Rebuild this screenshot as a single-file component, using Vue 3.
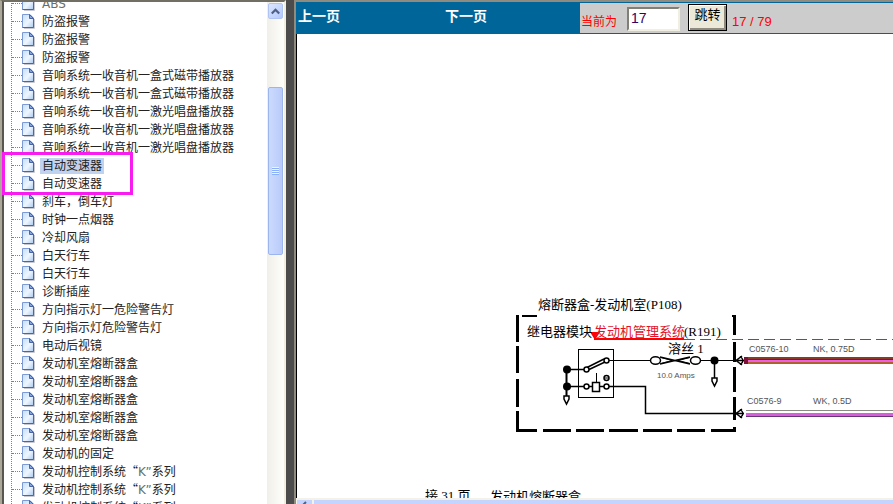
<script setup>
import { ref } from 'vue'

const items = [
  'ABS',
  '防盗报警',
  '防盗报警',
  '防盗报警',
  '音响系统一收音机一盒式磁带播放器',
  '音响系统一收音机一盒式磁带播放器',
  '音响系统一收音机一激光唱盘播放器',
  '音响系统一收音机一激光唱盘播放器',
  '音响系统一收音机一激光唱盘播放器',
  '自动变速器',
  '自动变速器',
  '刹车，倒车灯',
  '时钟一点烟器',
  '冷却风扇',
  '白天行车',
  '白天行车',
  '诊断插座',
  '方向指示灯一危险警告灯',
  '方向指示灯危险警告灯',
  '电动后视镜',
  '发动机室熔断器盒',
  '发动机室熔断器盒',
  '发动机室熔断器盒',
  '发动机室熔断器盒',
  '发动机室熔断器盒',
  '发动机的固定',
  '发动机控制系统“K”系列',
  '发动机控制系统“K”系列',
  '发动机控制系统“K”系列',
]
const selected = ref(9)
const page = ref('17')
const current = ref(17)
const total = 79

function jump() {
  const n = parseInt(page.value, 10)
  if (n >= 1 && n <= total) current.value = n
}

// Splits a title so that Latin runs can take their own face.
function parts(title) {
  return title.split(/([A-Z]+”?)/).filter(Boolean)
}
</script>

<template>
  <div class="viewer" lang="zh-CN">
    <aside class="side">
      <div class="tree-view">
        <ul class="tree">
          <li v-for="(title, i) in items" :key="i" class="node">
            <svg class="page-icon" width="13" height="15" viewBox="0 0 13 15" aria-hidden="true">
              <defs>
                <linearGradient id="sheet" x1="0" y1="0" x2="1" y2="1">
                  <stop offset="0" stop-color="#c4def8" />
                  <stop offset="0.55" stop-color="#eef6ff" />
                  <stop offset="1" stop-color="#a9c9f0" />
                </linearGradient>
              </defs>
              <path d="M2 14.5H12.5V5" fill="none" stroke="#c9c9d4" />
              <path d="M.5.5H8L11.5 4V13.5H.5Z" fill="url(#sheet)" stroke="#7c9ad6" />
              <path d="M11.5 4V13.5H.5" fill="none" stroke="#5b5f9d" />
              <path d="M7.5.5V4.5H11.5Z" fill="#83a6dc" stroke="#4a64a6" />
            </svg>
            <a
              href="#"
              class="title"
              :class="{ selected: i === selected }"
              @click.prevent="selected = i"
            ><span v-for="(p, k) in parts(title)" :key="k" :class="{ latin: /[A-Z]/.test(p) }">{{ p }}</span></a>
          </li>
        </ul>
      </div>
      <div class="vbar">
        <button type="button" class="bar-button" aria-label="向上滚动">
          <svg width="9" height="7" viewBox="0 0 9 7" aria-hidden="true">
            <path d="M.8 5.5L4.5 1.8L8.2 5.5" fill="none" stroke="#4d6185" stroke-width="2.2" />
          </svg>
        </button>
        <div class="vthumb"><span class="grip"></span></div>
      </div>
      <div class="mark"></div>
    </aside>

    <div class="splitter"></div>

    <main class="content">
      <form class="toolbar" @submit.prevent="jump">
        <a href="#" class="nav">上一页</a>
        <a href="#" class="nav">下一页</a>
        <div class="pager">
          <label for="page" class="caption">当前为</label>
          <input id="page" v-model="page" type="text" class="page-input" />
          <button type="submit" class="jump">跳转</button>
          <span class="count">{{ current }} / {{ total }}</span>
        </div>
      </form>

      <div class="sheet">
        <svg class="diagram" width="100%" height="100%">
          <g transform="translate(-297 -34)">
            <!-- fuse box outline -->
            <g stroke="#000" stroke-width="3" fill="none">
              <path d="M517.5 315V342M517.5 346V373M517.5 379V407M517.5 411V432" />
              <path d="M516 430.5H537M543 430.5H571M576 430.5H604M609 430.5H638M643 430.5H672M677 430.5H705M711 430.5H736" />
              <path d="M734.5 316V335M734.5 342V362M734.5 367V392M734.5 397V420M734.5 427V432" />
              <path d="M522 316H537M732 316H736" stroke-width="2" />
            </g>

            <!-- relay -->
            <g stroke="#000" fill="none">
              <rect x="578.5" y="349.5" width="35" height="48" />
              <path d="M567 369.5H584M567 386.5H584M588 386.5H592M600 386.5H604" stroke-width="1.5" />
              <path d="M566.5 369V398" stroke-width="2" />
              <path d="M564 396H569V399L566.5 404L564 399Z" fill="#fff" stroke-width="1.5" />
              <path d="M587 367.5L604 359M588 370L605 362" stroke-width="1.5" />
              <rect x="592.5" y="382.5" width="7" height="9" stroke-width="1.5" />
              <path d="M596.5 373V382" />
              <g fill="#fff" stroke-width="1.5">
                <circle cx="586.5" cy="369.5" r="2.5" />
                <circle cx="606.5" cy="360.5" r="2.5" />
                <circle cx="606.5" cy="378" r="2.5" />
                <circle cx="586.5" cy="386.5" r="2.5" />
                <circle cx="606.5" cy="386.5" r="2.5" />
              </g>
              <path d="M604 378H609" />
            </g>
            <g fill="#000">
              <circle cx="567" cy="369.5" r="4" />
              <circle cx="567" cy="386.5" r="4" />
              <circle cx="714.5" cy="360.5" r="4" />
            </g>

            <!-- fuse and leads -->
            <g stroke="#000" fill="none">
              <path d="M609 360.5H651M700 360.5H738" />
              <path d="M609 386.5H645.5V413.5H738" stroke-width="1.5" />
              <path d="M660 357L690 364M660 364L690 357" stroke-width="1.5" />
              <path d="M661 357.5L672 360.5L661 363.5M690 357.5L678 360.5L690 363.5" />
              <ellipse cx="655.5" cy="360.5" rx="5" ry="3.8" fill="#fff" stroke-width="1.5" />
              <ellipse cx="695.5" cy="360.5" rx="5" ry="3.8" fill="#fff" stroke-width="1.5" />
              <path d="M714.5 364V379" stroke-width="1.5" />
              <path d="M712 378H717V381L714.5 386L712 381Z" fill="#fff" stroke-width="1.5" />
            </g>

            <!-- outgoing wires -->
            <path d="M744 358H3000" stroke="#8a3b24" stroke-width="2" />
            <path d="M744 359.5H3000" stroke="#701848" stroke-width="1" />
            <path d="M744 361H3000" stroke="#ee5fe6" stroke-width="2" />
            <path d="M744 363H3000" stroke="#b0602c" stroke-width="2" />
            <path d="M746 410.5H3000" stroke="#8b8b83" />
            <path d="M746 414.5H3000" stroke="#d45fd8" stroke-width="3" />
            <path d="M746 416.5H3000" stroke="#693477" />
            <g stroke="#000" fill="none" stroke-width="1.5">
              <path d="M742 356L736 360.5L742 365M736 360.5H744" />
              <path d="M740 356.5Q746 360.5 740 364.5" />
              <path d="M742 409L736 413.5L742 418M736 413.5H744" />
              <path d="M740 409.5Q746 413.5 740 417.5" />
            </g>
            <path d="M744 357H748V364H744Z" fill="#7c1238" />

            <!-- system boundary -->
            <path d="M594 339H684" stroke="#f00" stroke-width="2" />
            <path d="M684 339.5H3000" stroke="#b02c60" stroke-dasharray="11 5" />
            <path d="M590 332H600L595 340Z" fill="#f00" />

            <g class="drawing-text">
              <text x="538" y="309">熔断器盒-发动机室(P108)</text>
              <text x="527" y="336">继电器模块</text>
              <text x="594" y="336" class="system">发动机管理系统</text>
              <text x="684" y="336">(R191)</text>
              <text x="668" y="353">溶丝 1</text>
              <text x="425" y="500">接 31 页</text>
              <text x="490" y="501">发动机熔断器盒</text>
            </g>
            <g class="wire-text">
              <text x="749" y="352">C0576-10</text>
              <text x="813" y="352">NK, 0.75D</text>
              <text x="747" y="404">C0576-9</text>
              <text x="813" y="404">WK, 0.5D</text>
              <text x="657" y="378" class="amps">10.0 Amps</text>
            </g>
          </g>
        </svg>
      </div>
      <div class="hbar">
        <button type="button" class="hbutton" aria-label="向左滚动">
          <svg width="5" height="8" viewBox="0 0 5 8" aria-hidden="true">
            <path d="M4 1L1 4L4 7" fill="none" stroke="#4d6185" stroke-width="2" />
          </svg>
        </button>
        <div class="hthumb"></div>
      </div>
    </main>
  </div>
</template>

<style>
body {
  overflow: hidden;
}
</style>

<style scoped>
.viewer {
  display: flex;
  height: 100vh;
  overflow: hidden;
  font-family: "Liberation Sans", "Noto Sans CJK SC", sans-serif;
  font-size: 12px;
  background: #fff;
}
.side {
  position: relative;
  box-sizing: border-box;
  display: flex;
  flex: 0 0 286px;
  border-left: 4px ridge #aca899;
  border-right: 2px solid #f1efe2;
  border-top: 2px solid #716f64;
}
.tree-view {
  flex: 1;
  overflow: hidden;
}
.tree {
  margin: -8px 0 0 7px;
  padding: 0;
  list-style: none;
  border-left: 1px dotted #808080;
}
.node {
  display: flex;
  align-items: center;
  height: 18px;
}
.node::before {
  content: "";
  width: 10px;
  border-top: 1px dotted #808080;
}
.page-icon {
  flex: none;
}
.title {
  align-self: flex-end;
  box-sizing: border-box;
  height: 16px;
  margin-left: 5px;
  padding: 0 2px;
  line-height: 13px;
  color: #222;
  font-family: "Noto Sans CJK SC", sans-serif;
  text-decoration: none;
  white-space: nowrap;
}
.latin {
  font-family: "DejaVu Sans", sans-serif;
  color: #6b6f62;
}
.selected {
  background: #c1d2ee;
}
.vbar {
  flex: 0 0 17px;
  background: linear-gradient(90deg, #f0efe9, #fefefb);
}
.bar-button {
  display: flex;
  align-items: center;
  justify-content: center;
  width: 15px;
  height: 16px;
  margin: 1px;
  padding: 0;
  border: 1px solid #b0c4f4;
  border-radius: 2px;
  background: linear-gradient(135deg, #dbe6ff, #b4c9fb);
}
.vthumb {
  display: flex;
  align-items: center;
  justify-content: center;
  box-sizing: border-box;
  width: 15px;
  height: 168px;
  margin: 68px 1px 0;
  border: 1px solid #9db5ee;
  border-radius: 2px;
  background: linear-gradient(90deg, #cbdafe, #b9cbf9);
}
.grip {
  width: 7px;
  height: 8px;
  background: repeating-linear-gradient(#eef4ff 0 1px, #8cb0f8 1px 2px);
}
.mark {
  position: absolute;
  left: -2px;
  top: 150px;
  box-sizing: border-box;
  width: 131px;
  height: 43px;
  border: 3px solid #f81cf0;
}
.splitter {
  flex: 0 0 8px;
  background: #4c4c4c;
}
.content {
  display: flex;
  flex: 1;
  flex-direction: column;
  min-width: 0;
  border-left: 2px solid #8f8c7f;
  border-top: 2px solid #8f8c7f;
}
.toolbar {
  display: grid;
  grid-template-columns: 147fr 137fr 313px;
  grid-template-rows: 30px;
  padding: 1px 0;
  background: #069;
}
.nav {
  padding-left: 2px;
  color: #fff;
  font: bold 14px/24px "Noto Sans CJK SC", sans-serif;
  text-decoration: none;
}
.pager {
  display: flex;
  align-items: flex-start;
  background: #ccc;
  color: #f00;
}
.caption,
.count {
  padding-top: 9px;
  line-height: 20px;
}
.caption {
  width: 46px;
  padding-left: 1px;
}
.count {
  font-size: 13px;
}
.page-input {
  box-sizing: border-box;
  width: 53px;
  height: 24px;
  margin-top: 4px;
  padding: 0 2px 2px;
  border: 2px solid;
  border-color: #808076 #f1efe2 #f1efe2 #808076;
  background: #fff;
  color: #306;
  font: 14px "Liberation Sans", sans-serif;
}
.jump {
  box-sizing: border-box;
  width: 39px;
  height: 27px;
  margin: 1px 5px 0 8px;
  padding: 0 0 7px;
  border: 1px solid #000;
  background: #ece9d8;
  box-shadow: inset 1px 1px #fff, inset -2px -2px #8f8c7f;
  color: #000;
  font: 13px/18px "Noto Sans CJK SC", sans-serif;
}
.sheet {
  flex: 1;
  min-height: 0;
  overflow: hidden;
  border-left: 1px solid #000;
}
.diagram {
  display: block;
}
.drawing-text {
  font: 13px "Liberation Serif", "Noto Sans CJK SC", serif;
  fill: #000;
}
.drawing-text .system {
  fill: #e0142c;
}
.wire-text {
  font: 9px "Liberation Sans", sans-serif;
  fill: #555;
}
.amps {
  font-size: 8px;
}
.hbar {
  display: flex;
  gap: 2px;
  flex: 0 0 4px;
  overflow: hidden;
  padding: 2px 0 0 1px;
  background: #f4f2e8;
}
.hbutton {
  display: flex;
  justify-content: center;
  flex: 0 0 15px;
  height: 15px;
  padding: 1px 0 0;
  border: 0;
  background: #c4d4fd;
}
.hthumb {
  flex: 1;
  height: 15px;
  background: #c4d4fd;
}
</style>
